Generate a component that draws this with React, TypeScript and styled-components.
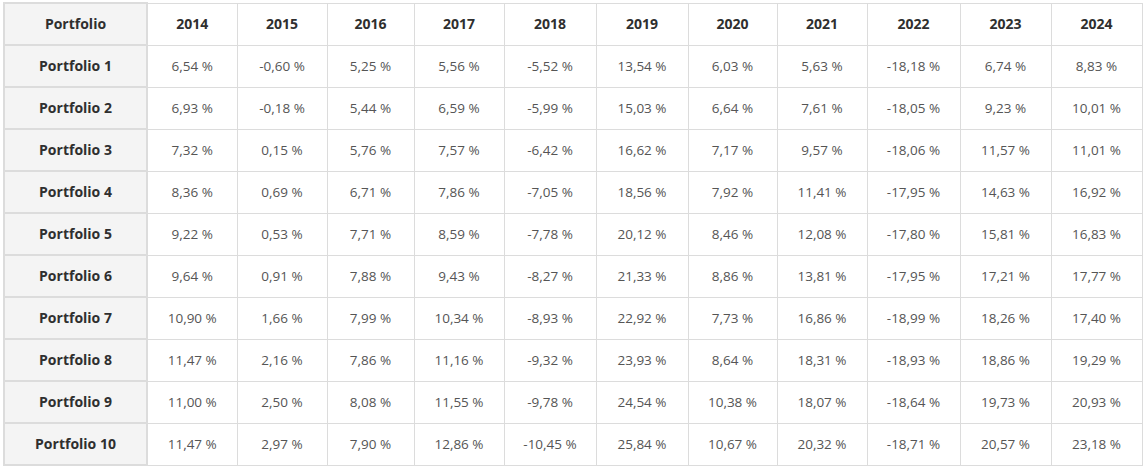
import React from "react"
import styled, { createGlobalStyle } from "styled-components"

const GlobalStyle = createGlobalStyle`
  html, body {
    margin: 0;
    padding: 0;
    background: #ffffff;
  }
  body {
    font-family: "Open Sans", "Noto Sans", Arial, sans-serif;
  }
`

const years = ["2014", "2015", "2016", "2017", "2018", "2019", "2020", "2021", "2022", "2023", "2024"]

const columnWidths = [143, 90, 90, 87, 90, 92, 92, 89, 90, 93, 91, 91]

const rows: string[][] = [
  ["6,54", "-0,60", "5,25", "5,56", "-5,52", "13,54", "6,03", "5,63", "-18,18", "6,74", "8,83"],
  ["6,93", "-0,18", "5,44", "6,59", "-5,99", "15,03", "6,64", "7,61", "-18,05", "9,23", "10,01"],
  ["7,32", "0,15", "5,76", "7,57", "-6,42", "16,62", "7,17", "9,57", "-18,06", "11,57", "11,01"],
  ["8,36", "0,69", "6,71", "7,86", "-7,05", "18,56", "7,92", "11,41", "-17,95", "14,63", "16,92"],
  ["9,22", "0,53", "7,71", "8,59", "-7,78", "20,12", "8,46", "12,08", "-17,80", "15,81", "16,83"],
  ["9,64", "0,91", "7,88", "9,43", "-8,27", "21,33", "8,86", "13,81", "-17,95", "17,21", "17,77"],
  ["10,90", "1,66", "7,99", "10,34", "-8,93", "22,92", "7,73", "16,86", "-18,99", "18,26", "17,40"],
  ["11,47", "2,16", "7,86", "11,16", "-9,32", "23,93", "8,64", "18,31", "-18,93", "18,86", "19,29"],
  ["11,00", "2,50", "8,08", "11,55", "-9,78", "24,54", "10,38", "18,07", "-18,64", "19,73", "20,93"],
  ["11,47", "2,97", "7,90", "12,86", "-10,45", "25,84", "10,67", "20,32", "-18,71", "20,57", "23,18"],
]

const Page = styled.div`
  padding: 2px 3px;
`

const Table = styled.table`
  border-collapse: collapse;
  table-layout: fixed;
  width: 1138px;
  border: 1px solid #dcdcdc;
`

const Row = styled.tr`
  height: 42px;
`

const LabelCell = styled.th`
  background: #f4f4f4;
  border: 2px solid #dcdcdc;
  color: #2f2f2f;
  font-size: 14px;
  font-weight: 700;
  text-align: center;
  vertical-align: middle;
  padding: 0 4px 1px;
  white-space: nowrap;
`

const YearCell = styled.th`
  background: #ffffff;
  border: 1px solid #dcdcdc;
  color: #2f2f2f;
  font-size: 14px;
  font-weight: 700;
  text-align: center;
  vertical-align: middle;
  padding: 0 4px 1px;
`

const ValueCell = styled.td`
  border: 1px solid #dcdcdc;
  color: #555555;
  font-size: 13.5px;
  font-weight: 400;
  text-align: center;
  vertical-align: middle;
  padding: 0 4px 1px;
  white-space: nowrap;
`

export default function App() {
  return (
    <Page>
      <GlobalStyle />
      <Table>
        <colgroup>
          {columnWidths.map((w, i) => (
            <col key={i} style={{ width: w }} />
          ))}
        </colgroup>
        <thead>
          <Row>
            <LabelCell>Portfolio</LabelCell>
            {years.map((y) => (
              <YearCell key={y}>{y}</YearCell>
            ))}
          </Row>
        </thead>
        <tbody>
          {rows.map((values, i) => (
            <Row key={i}>
              <LabelCell>Portfolio {i + 1}</LabelCell>
              {values.map((v, j) => (
                <ValueCell key={j}>{v} %</ValueCell>
              ))}
            </Row>
          ))}
        </tbody>
      </Table>
    </Page>
  )
}
